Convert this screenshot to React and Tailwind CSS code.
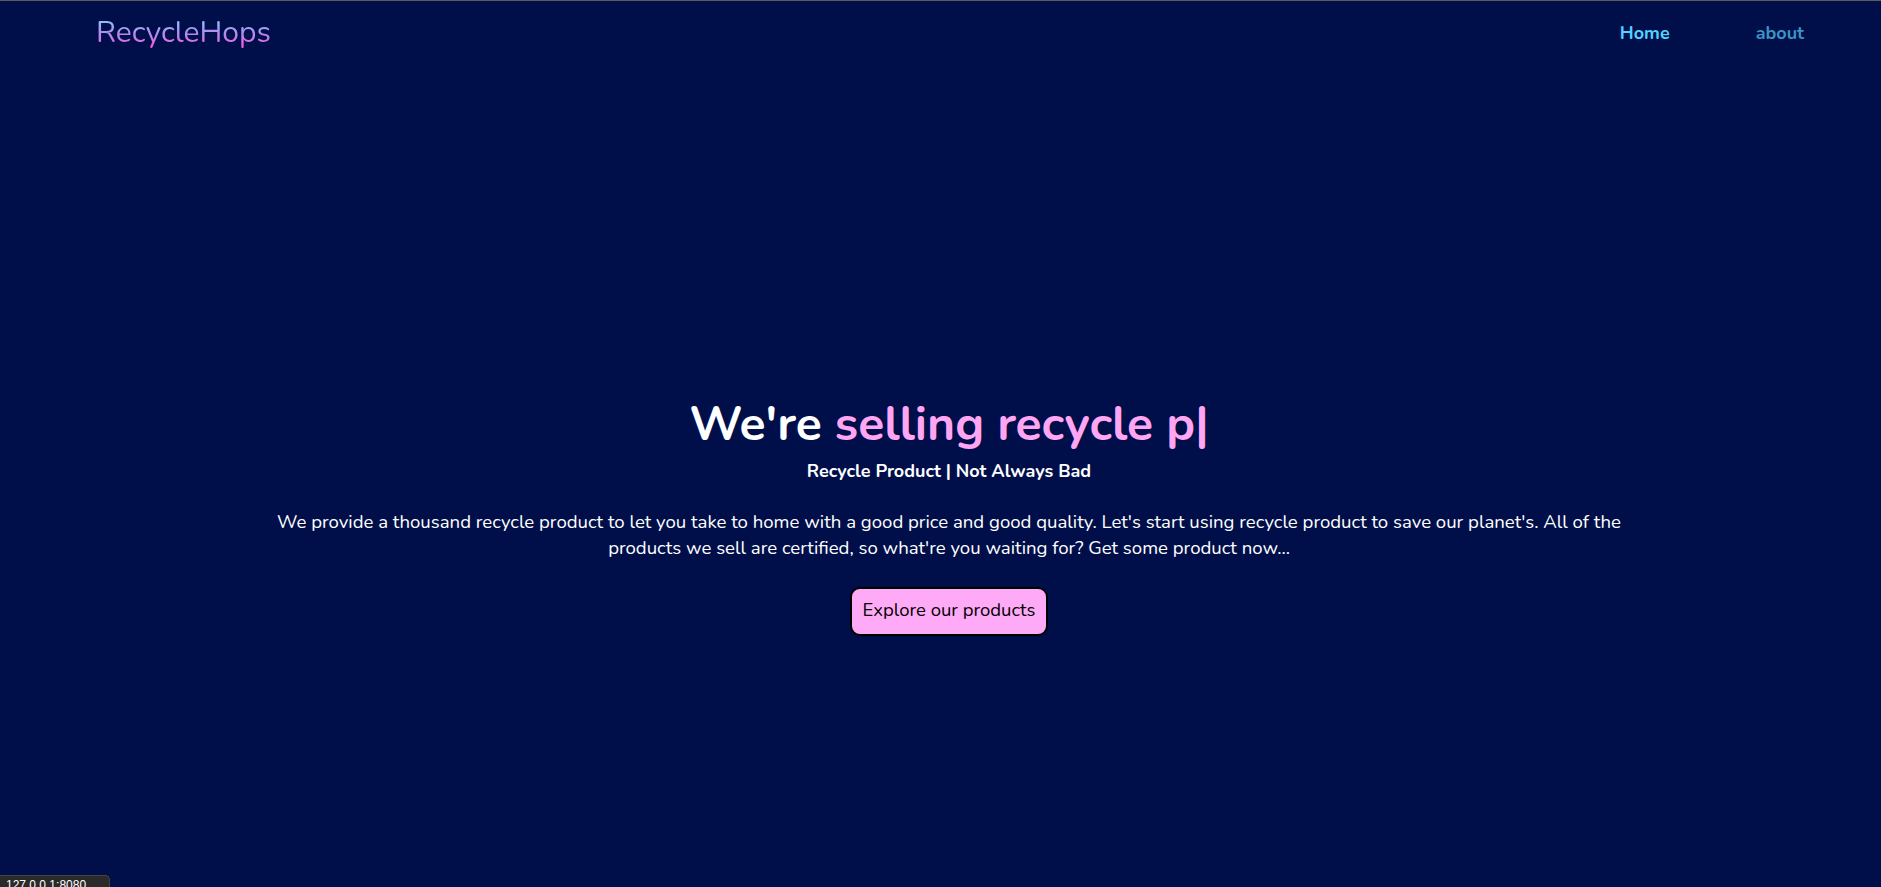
import React from "react";

function Navbar() {
  return (
    <nav className="flex items-center justify-between h-16 pl-24 pr-[77px]">
      <a
        href="#"
        className="text-[30px] leading-none bg-gradient-to-b from-[#86c6ff] via-[#b08cf0] to-[#f050dc] bg-clip-text text-transparent"
      >
        RecycleHops
      </a>
      <ul className="flex items-center gap-[86px] text-[18px]">
        <li>
          <a href="#" className="font-bold text-[#52d2ff]">
            Home
          </a>
        </li>
        <li>
          <a href="#" className="font-bold text-[#3d93c4]">
            about
          </a>
        </li>
      </ul>
    </nav>
  );
}

function Hero() {
  return (
    <section className="h-[887px] flex flex-col items-center justify-center text-center mt-[6px] pl-[17px]">
      <h1 className="text-[48px] font-bold leading-[60px] text-white">
        We're <span className="text-[#ffa6f2]">selling recycle p|</span>
      </h1>
      <p className="text-[18px] leading-[27px] font-bold text-white mt-[4px]">
        Recycle Product | Not Always Bad
      </p>
      <p className="w-[1410px] text-[18.6px] leading-[26px] text-white mt-[24px]">
        We provide a thousand recycle product to let you take to home with a
        good price and good quality. Let's start using recycle product to save
        our planet's. All of the products we sell are certified, so what're
        you waiting for? Get some product now...
      </p>
      <button className="mt-[26px] h-[49px] w-[198px] flex items-center justify-center bg-[#ffaaf6] text-black text-[18.5px] rounded-[10px] border-2 border-solid border-black">
        Explore our products
      </button>
    </section>
  );
}

export default function App() {
  return (
    <div
      className="relative h-[887px] overflow-hidden bg-[#000f4a] border-t border-[#5c5c5c]"
      style={{ fontFamily: "Nunito, Lato, 'Noto Sans', sans-serif" }}
    >
      <Navbar />
      <Hero />
      <div className="absolute left-0 bottom-0 h-[12px] w-[110px] bg-[#2a2a2a] rounded-tr-[5px] overflow-hidden border border-[#444] border-b-0 border-l-0">
        <span
          className="block pl-[6px] pt-[2px] text-[12px] leading-[14px] text-white"
          style={{ fontFamily: "'Liberation Sans', sans-serif" }}
        >
          127.0.0.1:8080
        </span>
      </div>
    </div>
  );
}
